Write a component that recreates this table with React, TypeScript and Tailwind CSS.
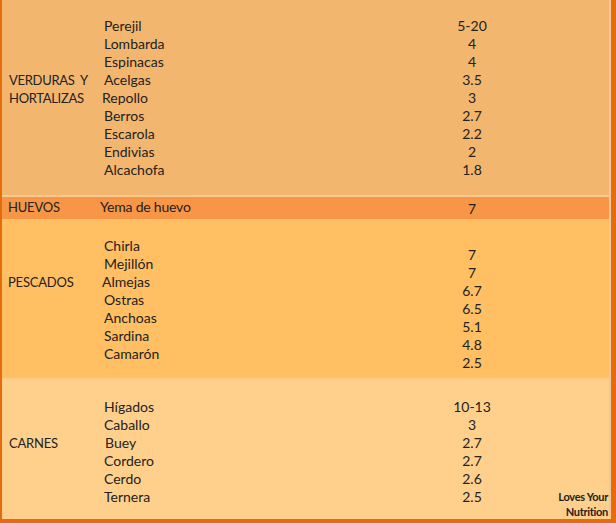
import React from 'react';

type Row = { name: string; nudge?: string };

const verduras: Row[] = [
  { name: 'Perejil' },
  { name: 'Lombarda' },
  { name: 'Espinacas' },
  { name: 'Acelgas' },
  { name: 'Repollo', nudge: '-ml-[2px]' },
  { name: 'Berros' },
  { name: 'Escarola' },
  { name: 'Endivias' },
  { name: 'Alcachofa' },
];
const verdurasVals = ['5-20', '4', '4', '3.5', '3', '2.7', '2.2', '2', '1.8'];

const pescados: Row[] = [
  { name: 'Chirla' },
  { name: 'Mejillón' },
  { name: 'Almejas', nudge: '-ml-[2px]' },
  { name: 'Ostras' },
  { name: 'Anchoas' },
  { name: 'Sardina' },
  { name: 'Camarón' },
];
const pescadosVals = ['7', '7', '6.7', '6.5', '5.1', '4.8', '2.5'];

const carnes: Row[] = [
  { name: 'Hígados' },
  { name: 'Caballo' },
  { name: 'Buey', nudge: 'ml-[1px]' },
  { name: 'Cordero' },
  { name: 'Cerdo' },
  { name: 'Ternera' },
];
const carnesVals = ['10-13', '3', '2.7', '2.7', '2.6', '2.5'];

const Items = ({ rows, pt }: { rows: Row[]; pt: string }) => (
  <div className={`w-[328px] ${pt}`}>
    {rows.map((r) => (
      <div key={r.name} className={`h-[18px] leading-[18px] ${r.nudge ?? ''}`}>
        {r.name}
      </div>
    ))}
  </div>
);

const Values = ({ vals, pt }: { vals: string[]; pt: string }) => (
  <div className={`w-[80px] text-center ${pt}`}>
    {vals.map((v, i) => (
      <div key={i} className="h-[18px] leading-[18px]">
        {v}
      </div>
    ))}
  </div>
);

export default function App() {
  return (
    <div
      className="w-[616px] h-[523px] border-l-2 border-r-[5px] border-b-4 border-[#E46C0A] text-[14px] text-[#222]"
      style={{ fontFamily: 'Lato, "Liberation Sans", sans-serif' }}
    >
      <div className="h-full border-r-2 border-[#F7C59A]">
        {/* Verduras y hortalizas */}
        <div className="flex h-[197px] bg-[#F3B66F] border-b-2 border-[#F8C98E]">
          <div className="w-[102px] pl-[7px] pt-[71px] leading-[18px] text-[13px] tracking-[-0.3px]">
            <div className="whitespace-pre">VERDURAS  Y</div>
            <div>HORTALIZAS</div>
          </div>
          <Items rows={verduras} pt="pt-[17px]" />
          <Values vals={verdurasVals} pt="pt-[17px]" />
        </div>

        {/* Huevos */}
        <div className="flex h-[22px] bg-[#F79646]">
          <div className="w-[102px] pl-[6px] pt-[1px] leading-[18px] text-[13px] tracking-[-0.2px]">HUEVOS</div>
          <div className="w-[328px] pt-[1px] leading-[18px] -ml-[4px] mr-[4px] tracking-[-0.2px]">Yema de huevo</div>
          <div className="w-[80px] pt-[3px] leading-[18px] text-center">7</div>
        </div>

        {/* Pescados */}
        <div className="flex h-[161px] bg-[#FFBF62] border-b-2 border-[#FFCB85]">
          <div className="w-[102px] pl-[6px] pt-[54px] leading-[18px] text-[13px] tracking-[-0.2px]">PESCADOS</div>
          <Items rows={pescados} pt="pt-[18px]" />
          <Values vals={pescadosVals} pt="pt-[27px]" />
        </div>

        {/* Carnes */}
        <div className="flex h-[139px] bg-[#FFD08C]">
          <div className="w-[102px] pl-[7px] pt-[54px] leading-[18px] text-[13px] tracking-[-0.2px]">CARNES</div>
          <Items rows={carnes} pt="pt-[18px]" />
          <Values vals={carnesVals} pt="pt-[18px]" />
          <div className="flex-1 pt-[109px] pr-[1px] text-right text-[11px] font-bold leading-[15px] tracking-[-0.3px]">
            <div>Loves Your</div>
            <div>Nutrition</div>
          </div>
        </div>
      </div>
    </div>
  );
}
